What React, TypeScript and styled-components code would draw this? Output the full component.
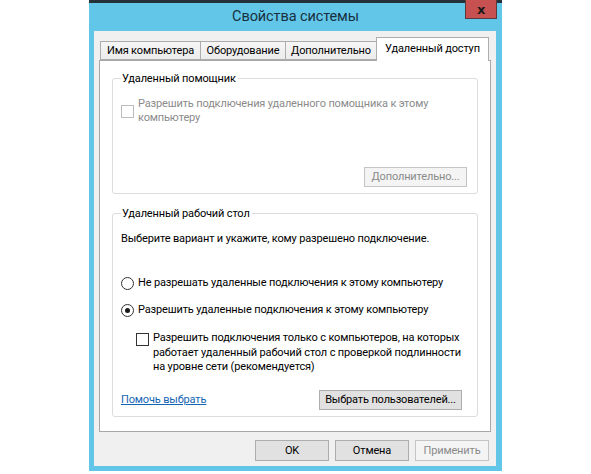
import React from 'react';
import styled, { createGlobalStyle } from 'styled-components';

const FONT = `Roboto, "Liberation Sans", "Noto Sans", sans-serif`;

const Global = createGlobalStyle`
  html, body { margin: 0; padding: 0; background: #ffffff; }
  body {
    font-family: ${FONT};
    font-size: 11px;
    letter-spacing: -0.15px;
    color: #000000;
  }
  #root { width: 591px; height: 474px; overflow: hidden; }
  * { box-sizing: border-box; }
`;

const Window = styled.div`
  margin-left: 89px;
  width: 413px;
  height: 471px;
  background: #62c6e9;
  border-top: 3px solid #25323a;
  display: flex;
  flex-direction: column;
`;

const TitleBar = styled.div`
  height: 28px;
  display: grid;
  grid-template-columns: 1fr auto 1fr;
  align-items: center;
`;

const Title = styled.div`
  grid-column: 2;
  font-size: 14.5px;
  letter-spacing: -0.1px;
  line-height: 28px;
  color: #17303f;
`;

const Close = styled.div`
  grid-column: 3;
  justify-self: end;
  align-self: start;
  margin-top: -3px;
  margin-right: 5px;
  width: 32px;
  height: 19px;
  background: #c75050;
  border: 1px solid #5a3b3b;
  border-top: none;
  display: flex;
  align-items: center;
  justify-content: center;
  font-family: "DejaVu Sans", sans-serif;
  font-weight: bold;
  font-size: 13px;
  color: #1a1a1a;
`;

const Client = styled.div`
  flex: 1;
  margin: 0 6px 5px 5px;
  background: #f0f0f0;
  padding: 6px 5px 0 5px;
  display: flex;
  flex-direction: column;
`;

const TabRow = styled.div`
  display: flex;
  align-items: flex-end;
  height: 23px;
  padding-left: 1px;
  position: relative;
  z-index: 1;
`;

const Tab = styled.div<{ $w: number; $active?: boolean; $first?: boolean }>`
  width: ${(p) => p.$w}px;
  flex: none;
  height: ${(p) => (p.$active ? 24 : 19)}px;
  margin-left: ${(p) => (p.$first ? 0 : -1)}px;
  margin-bottom: ${(p) => (p.$active ? -1 : 0)}px;
  border: 1px solid #adadad;
  border-bottom: ${(p) => (p.$active ? 'none' : '1px solid #adadad')};
  background: ${(p) => (p.$active ? '#ffffff' : 'linear-gradient(#f6f6f6, #ececec)')};
  display: flex;
  align-items: ${(p) => (p.$active ? 'flex-start' : 'center')};
  padding-top: ${(p) => (p.$active ? 3 : 0)}px;
  justify-content: center;
  line-height: 15px;
  white-space: nowrap;
  position: relative;
  z-index: ${(p) => (p.$active ? 2 : 1)};
`;

const Panel = styled.div`
  height: 372px;
  background: #ffffff;
  border: 1px solid #a7a7a7;
  padding: 10px 12px 0 12px;
  display: flex;
  flex-direction: column;
`;

const Group = styled.fieldset<{ $gap?: number }>`
  margin: ${(p) => p.$gap ?? 0}px 0 0 0;
  border: 1px solid #dcdcdc;
  border-radius: 3px;
  padding: 0 10px 6px 8px;
  display: flex;
  flex-direction: column;
  align-items: flex-start;
  min-width: 0;
`;

const Legend = styled.legend`
  padding: 0 2px 0 1px;
  line-height: 15px;
  color: #000000;
`;

const Text = styled.div<{ $mt: number }>`
  margin-top: ${(p) => p.$mt}px;
  line-height: 14px;
  white-space: nowrap;
`;

const OptionRow = styled.div<{ $mt: number; $indent?: number; $align?: string }>`
  margin-top: ${(p) => p.$mt}px;
  margin-left: ${(p) => p.$indent ?? 0}px;
  display: flex;
  align-items: ${(p) => p.$align ?? 'center'};
  gap: 4px;
`;

const Box = styled.span<{ $disabled?: boolean; $mt?: number }>`
  width: 13px;
  height: 13px;
  flex: none;
  margin-top: ${(p) => p.$mt ?? 0}px;
  background: #ffffff;
  border: 1px solid ${(p) => (p.$disabled ? '#bcbcbc' : '#333333')};
`;

const Radio = styled.span<{ $on?: boolean }>`
  width: 13px;
  height: 13px;
  flex: none;
  border-radius: 50%;
  background: #ffffff;
  border: 1px solid #333333;
  display: flex;
  align-items: center;
  justify-content: center;
  &::after {
    content: '';
    display: ${(p) => (p.$on ? 'block' : 'none')};
    width: 5px;
    height: 5px;
    border-radius: 50%;
    background: #1a1a1a;
  }
`;

const Label = styled.span<{ $disabled?: boolean; $lh?: number }>`
  line-height: ${(p) => p.$lh ?? 14}px;
  color: ${(p) => (p.$disabled ? '#8b8b8b' : '#000000')};
  white-space: nowrap;
`;

const Button = styled.button<{ $w: number; $h?: number; $disabled?: boolean; $mr?: number }>`
  width: ${(p) => p.$w}px;
  height: ${(p) => p.$h ?? 20}px;
  margin: 0 ${(p) => p.$mr ?? 0}px 0 0;
  padding: 0;
  font-family: ${FONT};
  font-size: 11px;
  letter-spacing: -0.15px;
  line-height: 14px;
  border-radius: 0;
  border: 1px solid ${(p) => (p.$disabled ? '#c4c4c4' : '#adadad')};
  background: ${(p) => (p.$disabled ? '#f4f4f4' : '#e1e1e1')};
  color: ${(p) => (p.$disabled ? '#8a8a8a' : '#000000')};
  white-space: nowrap;
`;

const AssistButtonRow = styled.div`
  align-self: flex-end;
  margin-top: 42px;
`;

const BottomRow = styled.div`
  align-self: stretch;
  margin-top: 15px;
  display: flex;
  align-items: center;
  justify-content: space-between;
`;

const Link = styled.a`
  color: #1565b5;
  text-decoration: underline;
  line-height: 14px;
  cursor: pointer;
`;

const DialogButtons = styled.div`
  margin-top: 8px;
  margin-right: 2px;
  display: flex;
  justify-content: flex-end;
  gap: 6px;
`;

export default function App() {
  return (
    <>
      <Global />
      <Window>
        <TitleBar>
          <Title>Свойства системы</Title>
          <Close>x</Close>
        </TitleBar>
        <Client>
          <TabRow>
            <Tab $w={101} $first>Имя компьютера</Tab>
            <Tab $w={86}>Оборудование</Tab>
            <Tab $w={92}>Дополнительно</Tab>
            <Tab $w={113} $active>Удаленный доступ</Tab>
          </TabRow>
          <Panel>
            <Group>
              <Legend>Удаленный помощник</Legend>
              <OptionRow $mt={11}>
                <Box $disabled />
                <Label $disabled>
                  Разрешить подключения удаленного помощника к этому
                  <br />
                  компьютеру
                </Label>
              </OptionRow>
              <AssistButtonRow>
                <Button $w={103} $disabled>Дополнительно...</Button>
              </AssistButtonRow>
            </Group>
            <Group $gap={12}>
              <Legend>Удаленный рабочий стол</Legend>
              <Text $mt={11}>Выберите вариант и укажите, кому разрешено подключение.</Text>
              <OptionRow $mt={30}>
                <Radio />
                <Label>Не разрешать удаленные подключения к этому компьютеру</Label>
              </OptionRow>
              <OptionRow $mt={13}>
                <Radio $on />
                <Label>Разрешить удаленные подключения к этому компьютеру</Label>
              </OptionRow>
              <OptionRow $mt={14} $indent={15} $align="flex-start">
                <Box $mt={2} />
                <Label $lh={14.5}>
                  Разрешить подключения только с компьютеров, на которых
                  <br />
                  работает удаленный рабочий стол с проверкой подлинности
                  <br />
                  на уровне сети (рекомендуется)
                </Label>
              </OptionRow>
              <BottomRow>
                <Link>Помочь выбрать</Link>
                <Button $w={143} $mr={5}>Выбрать пользователей...</Button>
              </BottomRow>
            </Group>
          </Panel>
          <DialogButtons>
            <Button $w={74} $h={21}>OK</Button>
            <Button $w={74} $h={21}>Отмена</Button>
            <Button $w={74} $h={21} $disabled>Применить</Button>
          </DialogButtons>
        </Client>
      </Window>
    </>
  );
}
